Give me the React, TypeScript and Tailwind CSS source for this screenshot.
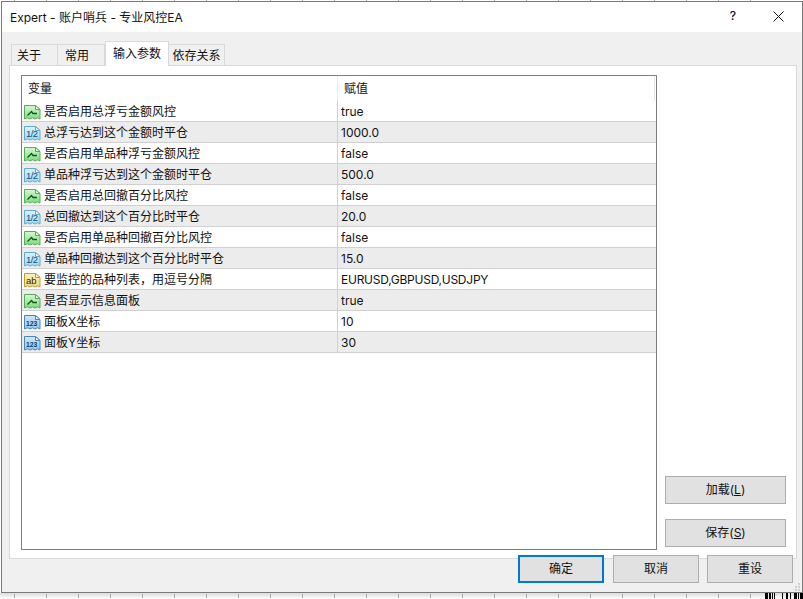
import React from "react";

type Kind = "bool" | "double" | "string" | "int";
const rows: [Kind, string, string][] = [
  ["bool", "是否启用总浮亏金额风控", "true"],
  ["double", "总浮亏达到这个金额时平仓", "1000.0"],
  ["bool", "是否启用单品种浮亏金额风控", "false"],
  ["double", "单品种浮亏达到这个金额时平仓", "500.0"],
  ["bool", "是否启用总回撤百分比风控", "false"],
  ["double", "总回撤达到这个百分比时平仓", "20.0"],
  ["bool", "是否启用单品种回撤百分比风控", "false"],
  ["double", "单品种回撤达到这个百分比时平仓", "15.0"],
  ["string", "要监控的品种列表，用逗号分隔", "EURUSD,GBPUSD,USDJPY"],
  ["bool", "是否显示信息面板", "true"],
  ["int", "面板X坐标", "10"],
  ["int", "面板Y坐标", "30"],
];

const palette: Record<Kind, { top: string; bottom: string; edge: string; fold: string }> = {
  bool: { top: "#d8f6d2", bottom: "#7fdc7c", edge: "#55ad5c", fold: "#f2fcef" },
  double: { top: "#d8f2fa", bottom: "#9edcf0", edge: "#63a9cf", fold: "#f3fbfe" },
  string: { top: "#fdf3b8", bottom: "#f3d976", edge: "#b79c4a", fold: "#fffbe2" },
  int: { top: "#cfe6f8", bottom: "#94c6ee", edge: "#4a86bd", fold: "#eef7fd" },
};

function ParamIcon({ kind }: { kind: Kind }) {
  const c = palette[kind];
  const id = `grad-${kind}`;
  return (
    <svg width="17" height="16" viewBox="0 0 17 16" className="shrink-0">
      <defs>
        <linearGradient id={id} x1="0" y1="0" x2="0" y2="1">
          <stop offset="0" stopColor={c.top} />
          <stop offset="1" stopColor={c.bottom} />
        </linearGradient>
      </defs>
      <path
        d="M0.5 1.5H11.5L16 5.5V15L13.5 13.8L11 15L8.5 13.8L6 15L3.5 13.8L0.5 15Z"
        fill={`url(#${id})`}
        stroke={c.edge}
      />
      <path d="M11.5 1.5V5.5H16Z" fill={c.fold} stroke={c.edge} />
      {kind === "bool" && <path d="M3.5 11.5L7.5 7.5L9 9.5H13" fill="none" stroke="#0b5a1c" strokeWidth="1.3" />}
      {kind === "double" && (
        <text x="2" y="11.5" fontSize="9.5" fontFamily="Liberation Sans" letterSpacing="-0.6" fill="#164a80">
          1/2
        </text>
      )}
      {kind === "string" && (
        <text x="2" y="12" fontSize="9.5" fontFamily="Liberation Sans" fill="#2f2808">
          ab
        </text>
      )}
      {kind === "int" && (
        <text x="2" y="11.5" fontSize="6.8" fontFamily="Liberation Sans" fontWeight="700" fill="#0f3c74">
          123
        </text>
      )}
    </svg>
  );
}

function Btn({ children, primary, className = "" }: { children: React.ReactNode; primary?: boolean; className?: string }) {
  return (
    <div
      className={`flex items-center justify-center bg-[#e1e1e1] ${
        primary ? "border-2 border-[#0078d7]" : "border border-[#adadad]"
      } ${className}`}
    >
      {children}
    </div>
  );
}

function Ticks() {
  return (
    <div className="flex h-full pl-[14px] gap-[31px]">
      {Array.from({ length: 24 }).map((_, i) => (
        <div key={i} className="w-px h-full bg-[#a8a8a8]" />
      ))}
    </div>
  );
}

const bars: [number, number][] = [
  [765, 3],
  [769, 2],
  [772, 1],
  [774, 1],
  [782, 1],
  [786, 2],
  [790, 1],
  [794, 3],
  [798, 1],
  [800, 3],
];

export default function App() {
  return (
    <div
      className="w-[803px] h-[599px] bg-white flex flex-col overflow-hidden text-[12px] text-[#111]"
      style={{ fontFamily: 'Inter, "Noto Sans CJK SC", sans-serif' }}
    >
      <div className="h-px shrink-0 overflow-hidden">
        <Ticks />
      </div>
      <div className="h-[592px] shrink-0 ml-px w-[802px] border border-[#7a7a7a] bg-[#f0f0f0] flex flex-col relative">
        <div className="h-[30px] shrink-0 bg-white flex items-center pl-[8px]">
          <span className="flex-1 pt-px">Expert - 账户哨兵 - 专业风控EA</span>
          <span className="w-[14px] text-center mr-[33px] mb-[2px] font-medium">?</span>
          <svg width="11" height="11" viewBox="0 0 11 11" className="mr-[18px] mb-[2px]">
            <path d="M0.5 0.5L10.5 10.5M10.5 0.5L0.5 10.5" stroke="#111" strokeWidth="1" />
          </svg>
        </div>

        <div className="flex h-[33px] shrink-0 pl-[9px] items-end">
          <div className="w-[47px] h-[21px] border border-[#d9d9d9] border-b-0 flex items-center pl-[5px] pt-[2px]">关于</div>
          <div className="w-[47px] h-[21px] border border-l-0 border-[#d9d9d9] border-b-0 flex items-center pl-[7px] pt-[2px]">常用</div>
          <div className="w-[64px] h-[25px] -mb-px relative bg-white border border-[#d9d9d9] border-b-0 flex items-center justify-center">输入参数</div>
          <div className="w-[56px] h-[21px] border border-l-0 border-[#d9d9d9] border-b-0 flex items-center justify-center pt-[2px]">依存关系</div>
        </div>

        <div className="h-[494px] shrink-0 ml-[7px] w-[788px] bg-white border border-[#d9d9d9] flex pl-[11px] pt-[9px] pb-[8px]">
          <div className="w-[636px] h-[475px] border border-[#7f7f7f] shrink-0">
            <div className="flex h-[25px] pr-px">
              <div className="w-[316px] pl-[6px] flex items-center border-r border-[#ececec]">变量</div>
              <div className="flex-1 pl-[6px] flex items-center border-r border-[#e5e5e5]">赋值</div>
            </div>
            {rows.map(([kind, name, value], i) => (
              <div key={name} className={`flex h-[21px] border-b border-[#d0d0d0] ${i % 2 ? "bg-[#ececec]" : "bg-white"}`}>
                <div className="w-[316px] pl-[2px] pt-px flex items-center gap-[3px] border-r border-[#d0d0d0] whitespace-nowrap">
                  <ParamIcon kind={kind} />
                  <span>{name}</span>
                </div>
                <div className={`flex-1 pl-[3px] pt-px flex items-center ${kind === "string" ? "tracking-[-0.25px]" : ""}`}>{value}</div>
              </div>
            ))}
          </div>
          <div className="flex-1 flex flex-col justify-end items-start pl-[8px] pb-[3px] gap-[15px]">
            <Btn className="w-[121px] h-[28px]"><span>加载(<u>L</u>)</span></Btn>
            <Btn className="w-[121px] h-[28px]"><span>保存(<u>S</u>)</span></Btn>
          </div>
        </div>

        <div className="flex-1 relative">
          <div className="absolute right-[9px] top-[-4px] flex gap-[8px]">
            <Btn primary className="w-[86px] h-[28px] mr-px">确定</Btn>
            <Btn className="w-[86px] h-[28px]">取消</Btn>
            <Btn className="w-[86px] h-[28px]">重设</Btn>
          </div>
        </div>
        <svg width="8" height="8" viewBox="0 0 8 8" className="absolute right-[1px] bottom-[1px]">
          <path d="M5 0h2v2H5zM2 3h2v2H2zM5 3h2v2H5zM0 6h1v1H0zM2 6h2v2H2zM5 6h2v2H5z" fill="#cfcfcf" />
        </svg>
      </div>
      <div className="flex-1 overflow-hidden relative bg-gradient-to-b from-[#dcdcdc] to-white">
        <div className="h-[4px] mt-[1px]">
          <Ticks />
        </div>
        {bars.map(([x, w]) => (
          <div key={x} className="absolute top-0 bottom-0 bg-black" style={{ left: x, width: w }} />
        ))}
      </div>
    </div>
  );
}
